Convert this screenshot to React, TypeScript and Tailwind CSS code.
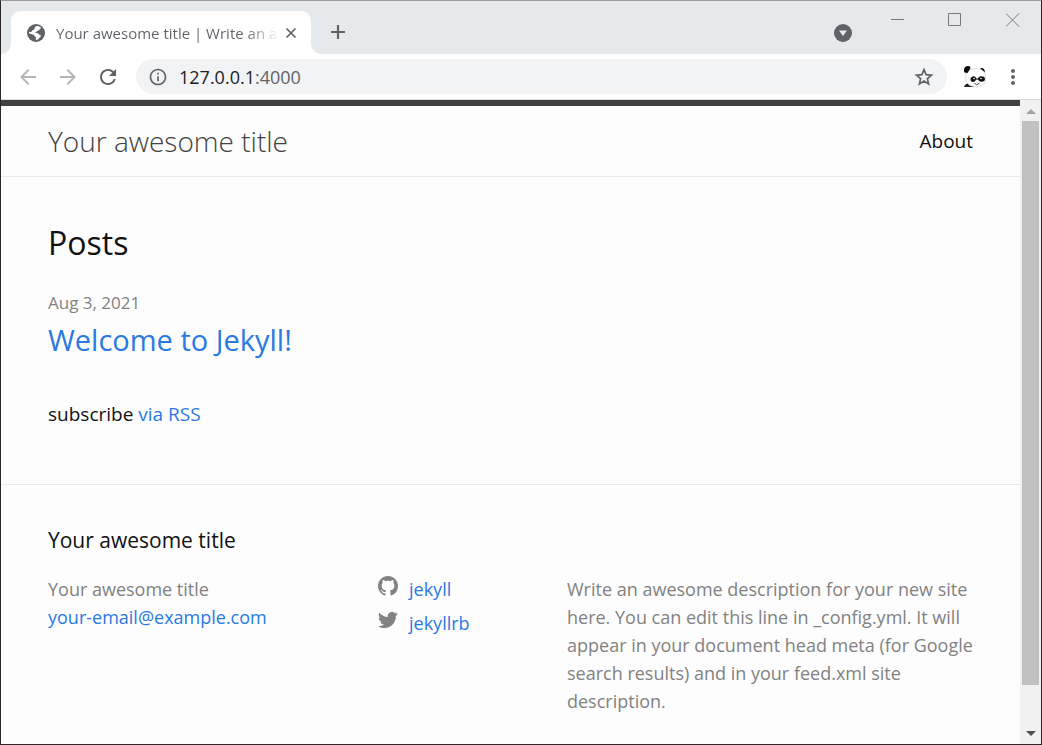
import React from "react";
import {
  MdArrowBack,
  MdArrowForward,
  MdInfoOutline,
  MdMoreVert,
  MdRefresh,
} from "react-icons/md";

function TabFoot({ flip = false }: { flip?: boolean }) {
  return (
    <svg viewBox="0 0 10 10" className={flip ? "size-[10px] -scale-x-100" : "size-[10px]"} aria-hidden="true">
      <path d="M10 0v10H0A10 10 0 0 0 10 0z" fill="#fff" />
    </svg>
  );
}

function Globe() {
  return (
    <svg viewBox="0 0 18 18" className="size-[18px] shrink-0" aria-hidden="true">
      <circle cx="9" cy="9" r="9" fill="#5f6368" />
      <path
        d="M9.500 2c2 0 3.500.7 4.500 1.700-.3 1.300-1.400 1.300-1.900 2.300-.5 1-1.900.6-2.400 1.500-.4.900-1.600.8-2.200 1.200 1.500.2 3.500 0 4.200 1.200.6 1.200 2 .8 2.300 1.800-.2 1.300-1.600 1.500-2 2.600-.3.900-1.500 1.700-3 1.700-.4-.8-.2-1.900.3-2.600-.8-.5-1.700-1-1.800-2C6.300 10.600 4 9.600 2 9.500 1.900 8.900 2 8.300 2.100 7.800 3 8 4 8.200 4.800 7.600c.4-1.300 1.400-1.900 2.600-2C7.200 4.200 8 2.700 9.500 2z"
        fill="#fff"
      />
    </svg>
  );
}

function CloseCross() {
  return (
    <svg viewBox="0 0 16 16" className="size-4" aria-hidden="true">
      <path d="M3.500 3.500l9 9M12.500 3.500l-9 9" stroke="currentColor" strokeWidth="1.700" />
    </svg>
  );
}

function Plus() {
  return (
    <svg viewBox="0 0 24 24" className="size-6" aria-hidden="true">
      <path d="M12 5v14M5 12h14" stroke="currentColor" strokeWidth="2.200" />
    </svg>
  );
}

function Star() {
  return (
    <svg viewBox="0 0 22 22" className="size-[22px]" aria-hidden="true">
      <path
        d="M11 3.600l2.100 5 5.400.5-4.100 3.500 1.200 5.300L11 15.100l-4.600 2.800 1.200-5.300-4.100-3.500 5.400-.5z"
        fill="none"
        stroke="currentColor"
        strokeWidth="1.700"
      />
    </svg>
  );
}

function Panda() {
  return (
    <svg viewBox="0 0 24 24" className="size-6" aria-hidden="true">
      <path d="M4 7C6 3 17 2 21 7c2 3 2 9 0 12-3 4-13 4-16 0C2 16 2 10 4 7z" fill="#fff" stroke="#cfcfcf" strokeWidth=".7" />
      <path d="M1.500 7.500C0 4 2 1 5 1c2 0 3 1 2 3L4.500 8zM17 3.500c2-1.500 5 0 5 4-1-1.500-3-2.500-5-4z" fill="#050505" />
      <path d="M7.500 14.500c0-2.500 3-4.500 5-2.500 1.300 2 0 5-2.500 5-1.500 0-2.500-1-2.500-2.500zM15.500 12.500c2-2 6.500-1.500 6.500 1.500 0 2.200-2.500 3.400-4.500 2.500-2-.5-3-2.500-2-4z" fill="#111" />
      <path d="M12 14h5" stroke="#111" strokeWidth="1.200" />
      <circle cx="11" cy="13.500" r=".8" fill="#fff" />
      <circle cx="18" cy="13.500" r=".8" fill="#fff" />
      <path d="M11.500 18l2 2 3-2" fill="none" stroke="#333" strokeWidth=".9" />
      <path d="M1 22c1-3 3-4 4-3 1 2 4 2 6 3z" fill="#222" />
    </svg>
  );
}

function GithubMark() {
  return (
    <svg viewBox="0 0 16 16" className="mt-px size-5" fill="#828282" aria-hidden="true">
      <path d="M8 0C3.58 0 0 3.58 0 8c0 3.54 2.29 6.53 5.47 7.59.4.07.55-.17.55-.38 0-.19-.01-.82-.01-1.49-2.01.37-2.53-.49-2.69-.94-.09-.23-.48-.94-.82-1.13-.28-.15-.68-.52-.01-.53.63-.01 1.08.58 1.23.82.72 1.21 1.87.87 2.33.66.07-.52.28-.87.51-1.07-1.78-.2-3.64-.89-3.64-3.95 0-.87.31-1.59.82-2.15-.08-.2-.36-1.02.08-2.12 0 0 .67-.21 2.2.82.64-.18 1.32-.27 2-.27s1.36.09 2 .27c1.53-1.04 2.2-.82 2.2-.82.44 1.1.16 1.92.08 2.12.51.56.82 1.27.82 2.15 0 3.07-1.87 3.75-3.65 3.95.29.25.54.73.54 1.48 0 1.07-.01 1.93-.01 2.2 0 .21.15.46.55.38A8.01 8.01 0 0 0 16 8c0-4.42-3.58-8-8-8z" />
    </svg>
  );
}

function TwitterMark() {
  return (
    <svg viewBox="0 0 16 16" className="mt-px size-5" fill="#828282" aria-hidden="true">
      <path d="M15.969 3.058c-.586.26-1.217.436-1.878.515.675-.405 1.194-1.045 1.438-1.809-.632.375-1.332.647-2.076.793a3.27 3.27 0 0 0-5.573 2.981A9.281 9.281 0 0 1 1.142 2.12a3.27 3.27 0 0 0 1.011 4.364 3.254 3.254 0 0 1-1.48-.409v.041a3.271 3.271 0 0 0 2.622 3.205 3.27 3.27 0 0 1-1.476.056 3.271 3.271 0 0 0 3.053 2.27A6.558 6.558 0 0 1 0 13.001a9.254 9.254 0 0 0 5.01 1.468c6.013 0 9.3-4.98 9.3-9.3 0-.142-.003-.283-.01-.423a6.642 6.642 0 0 0 1.669-1.688z" />
    </svg>
  );
}

function BrowserTabs() {
  return (
    <div className="flex items-end bg-[#e5e9ec] pt-[10px]">
      <TabFoot />
      <div className="flex h-[43px] w-[300px] items-center rounded-t-[9px] bg-white pr-3 pl-4 text-[#5f6368]">
        <Globe />
        <span className="ml-[11px] flex-1 bg-linear-to-r from-[#5f6368] from-85% to-transparent bg-clip-text text-[15px] leading-6 whitespace-nowrap text-transparent">
          Your awesome title | Write an a
        </span>
        <button type="button" aria-label="Close tab" className="ml-1">
          <CloseCross />
        </button>
      </div>
      <TabFoot flip />
      <button type="button" aria-label="New tab" className="mb-[10px] ml-[5px] text-[#5f6368]">
        <Plus />
      </button>
      <div className="flex-1" />
      <button type="button" aria-label="Search tabs" className="mr-[38px] mb-3">
        <svg viewBox="0 0 18 18" className="size-[18px]" aria-hidden="true">
          <circle cx="9" cy="9" r="9" fill="#5f6368" />
          <path d="M5 6.500h8L9 12z" fill="#e5e9ec" />
        </svg>
      </button>
      <div className="mb-[27px] flex gap-11 pr-[21px] text-[#777b80]">
        <button type="button" aria-label="Minimize">
          <svg viewBox="0 0 14 14" className="size-[14px]" stroke="currentColor" aria-hidden="true">
            <path d="M1 6.500h13" />
          </svg>
        </button>
        <button type="button" aria-label="Maximize">
          <svg viewBox="0 0 14 14" className="size-[14px]" fill="none" stroke="currentColor" aria-hidden="true">
            <path d="M.5.5h12v12H.5z" />
          </svg>
        </button>
        <button type="button" aria-label="Close window">
          <svg viewBox="0 0 14 14" className="size-[14px]" stroke="currentColor" aria-hidden="true">
            <path d="M0 .5l13 13M13 .5l-13 13" />
          </svg>
        </button>
      </div>
    </div>
  );
}

function Toolbar() {
  return (
    <div className="flex items-center border-b border-[#dadce0] bg-white py-[5px] pr-4 pl-[15px] text-[#5f6368]">
      <button type="button" aria-label="Back" className="text-[#b4b6b9]">
        <MdArrowBack className="size-6" />
      </button>
      <button type="button" aria-label="Forward" className="ml-4 text-[#b4b6b9]">
        <MdArrowForward className="size-6" />
      </button>
      <button type="button" aria-label="Reload" className="ml-4">
        <MdRefresh className="size-6" />
      </button>
      <div className="ml-4 flex h-[35px] flex-1 items-center rounded-full bg-[#f1f3f4] px-3">
        <MdInfoOutline className="size-5 shrink-0" />
        <a href="#address" className="ml-[11px] flex-1 text-lg leading-6 text-[#5f6368]">
          <span className="text-[#202124]">127.0.0.1</span>:4000
        </a>
        <button type="button" aria-label="Bookmark this page">
          <Star />
        </button>
      </div>
      <button type="button" aria-label="Profile" className="ml-4">
        <Panda />
      </button>
      <button type="button" aria-label="Menu" className="ml-[14px]">
        <MdMoreVert className="size-6" />
      </button>
    </div>
  );
}

function Scrollbar() {
  return (
    <div className="flex w-[21px] shrink-0 flex-col items-center bg-[#f1f1f1]" aria-hidden="true">
      <svg viewBox="0 0 20 21" className="h-[21px] w-5">
        <path d="M5 14h10l-5-5z" fill="#a3a3a3" />
      </svg>
      <div className="w-[17px] grow-[564] bg-[#c1c1c1]" />
      <div className="grow-[38]" />
      <svg viewBox="0 0 20 21" className="h-[21px] w-5">
        <path d="M5 8h10l-5 5z" fill="#505050" />
      </svg>
    </div>
  );
}

function Site() {
  return (
    <div className="min-w-0 flex-1 overflow-hidden bg-[#fdfdfd] text-[19px] text-[#111]">
      <header className="flex h-[77px] items-center justify-between border-t-[6px] border-b border-t-[#424242] border-b-[#e8e8e8] px-[47px]">
        <a href="#home" className="text-[28px] font-light text-[#424242]">Your awesome title</a>
        <nav>
          <a href="#about">About</a>
        </nav>
      </header>
      <main className="px-[47px] pt-10 pb-14">
        <h2 className="text-[32px] leading-[52px]">Posts</h2>
        <ul className="mt-5">
          <li>
            <time dateTime="2021-08-03" className="block text-[17px] leading-7 text-[#828282]">Aug 3, 2021</time>
            <h3 className="text-[29px] leading-[45px]">
              <a href="#welcome" className="text-[#2a7ae2]">Welcome to Jekyll!</a>
            </h3>
          </li>
        </ul>
        <p className="mt-[38px] leading-7">
          subscribe <a href="#feed" className="text-[#2a7ae2]">via RSS</a>
        </p>
      </main>
      <footer className="border-t border-[#e8e8e8] px-[47px] py-[37px]">
        <h2 className="text-[21px] leading-9">Your awesome title</h2>
        <div className="mt-[17px] grid grid-cols-[330fr_189fr_406fr] text-lg leading-7 text-[#828282]">
          <ul>
            <li>Your awesome title</li>
            <li>
              <a href="#email" className="text-[#2a7ae2]">your-email@example.com</a>
            </li>
          </ul>
          <ul className="flex flex-col gap-[6px]">
            <li>
              <a href="#github" className="flex gap-[11px] text-[#2a7ae2]"><GithubMark />jekyll</a>
            </li>
            <li>
              <a href="#twitter" className="flex gap-[11px] text-[#2a7ae2]"><TwitterMark />jekyllrb</a>
            </li>
          </ul>
          <p>
            Write an awesome description for your new site here. You can edit this line in _config.yml. It will appear
            in your document head meta (for Google search results) and in your feed.xml site description.
          </p>
        </div>
      </footer>
    </div>
  );
}

export default function App() {
  return (
    <div className="flex h-screen flex-col border border-[#2b2728] border-t-[#9a9da0] bg-white font-['Open_Sans','Noto_Sans',sans-serif]">
      <BrowserTabs />
      <Toolbar />
      <div className="flex min-h-0 flex-1">
        <Site />
        <Scrollbar />
      </div>
    </div>
  );
}
